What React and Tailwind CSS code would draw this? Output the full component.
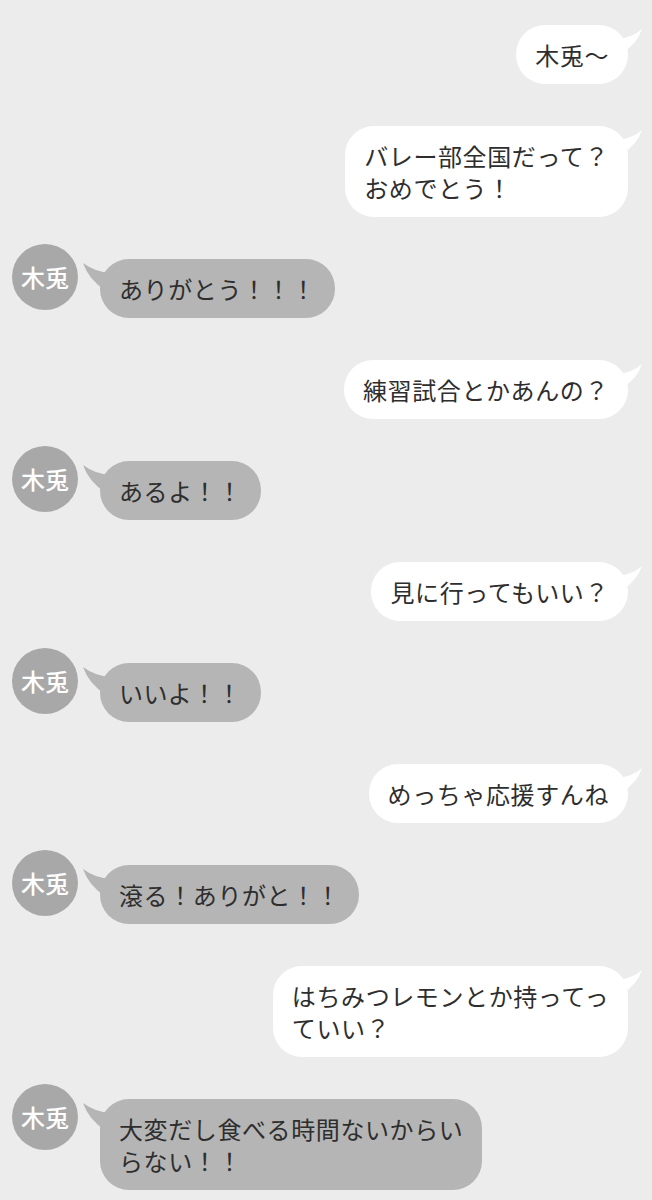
import React from "react";

const messages = [
  { me: true, lines: ["木兎〜"] },
  { me: true, lines: ["バレー部全国だって？", "おめでとう！"] },
  { me: false, lines: ["ありがとう！！！"] },
  { me: true, lines: ["練習試合とかあんの？"] },
  { me: false, lines: ["あるよ！！"] },
  { me: true, lines: ["見に行ってもいい？"] },
  { me: false, lines: ["いいよ！！"] },
  { me: true, lines: ["めっちゃ応援すんね"] },
  { me: false, lines: ["滾る！ありがと！！"] },
  { me: true, lines: ["はちみつレモンとか持ってっ", "ていい？"] },
  { me: false, lines: ["大変だし食べる時間ないからい", "らない！！"] },
];

function Text({ lines }) {
  return lines.map((l, i) => (
    <React.Fragment key={i}>
      {i > 0 && <br />}
      {l}
    </React.Fragment>
  ));
}

function MyBubble({ lines }) {
  return (
    <div className="flex justify-end pr-[24px]">
      <div className="relative rounded-[29px] bg-white px-[19px] py-[13.5px] whitespace-nowrap">
        {/* tail */}
        <svg
          className="absolute -right-[15px] top-0"
          width="30"
          height="30"
          viewBox="0 0 30 30"
        >
          <path d="M4 14 Q19 13 29 4 Q24 19 10 27 Z" fill="#ffffff" />
        </svg>
        <span className="relative">
          <Text lines={lines} />
        </span>
      </div>
    </div>
  );
}

function FriendBubble({ lines }) {
  return (
    <div className="flex items-start pl-[12px]">
      <div className="-mt-[15px] flex h-[66px] w-[66px] shrink-0 items-center justify-center rounded-full bg-[#a8a8a8] text-[24px] font-medium tracking-normal text-white">
        木兎
      </div>
      <div className="relative ml-[22px] rounded-[29px] bg-[#b5b5b5] px-[19px] py-[13.5px] whitespace-nowrap">
        <svg
          className="absolute -left-[17px] top-0"
          width="32"
          height="34"
          viewBox="0 0 32 34"
        >
          <path d="M28 14 Q12 13 0 4 Q6 21 22 31 Z" fill="#b5b5b5" />
        </svg>
        <span className="relative">
          <Text lines={lines} />
        </span>
      </div>
    </div>
  );
}

export default function App() {
  return (
    <div
      className="min-h-screen w-full bg-[#ececec] pt-[25px] pb-[20px] text-[24px] leading-[32px] tracking-[0.6px] text-[#2e2e2e]"
      style={{ fontFamily: '"Noto Sans CJK JP", "Noto Sans", sans-serif' }}
    >
      <div className="flex flex-col gap-[42px]">
        {messages.map((m, i) =>
          m.me ? (
            <MyBubble key={i} lines={m.lines} />
          ) : (
            <FriendBubble key={i} lines={m.lines} />
          )
        )}
      </div>
    </div>
  );
}
